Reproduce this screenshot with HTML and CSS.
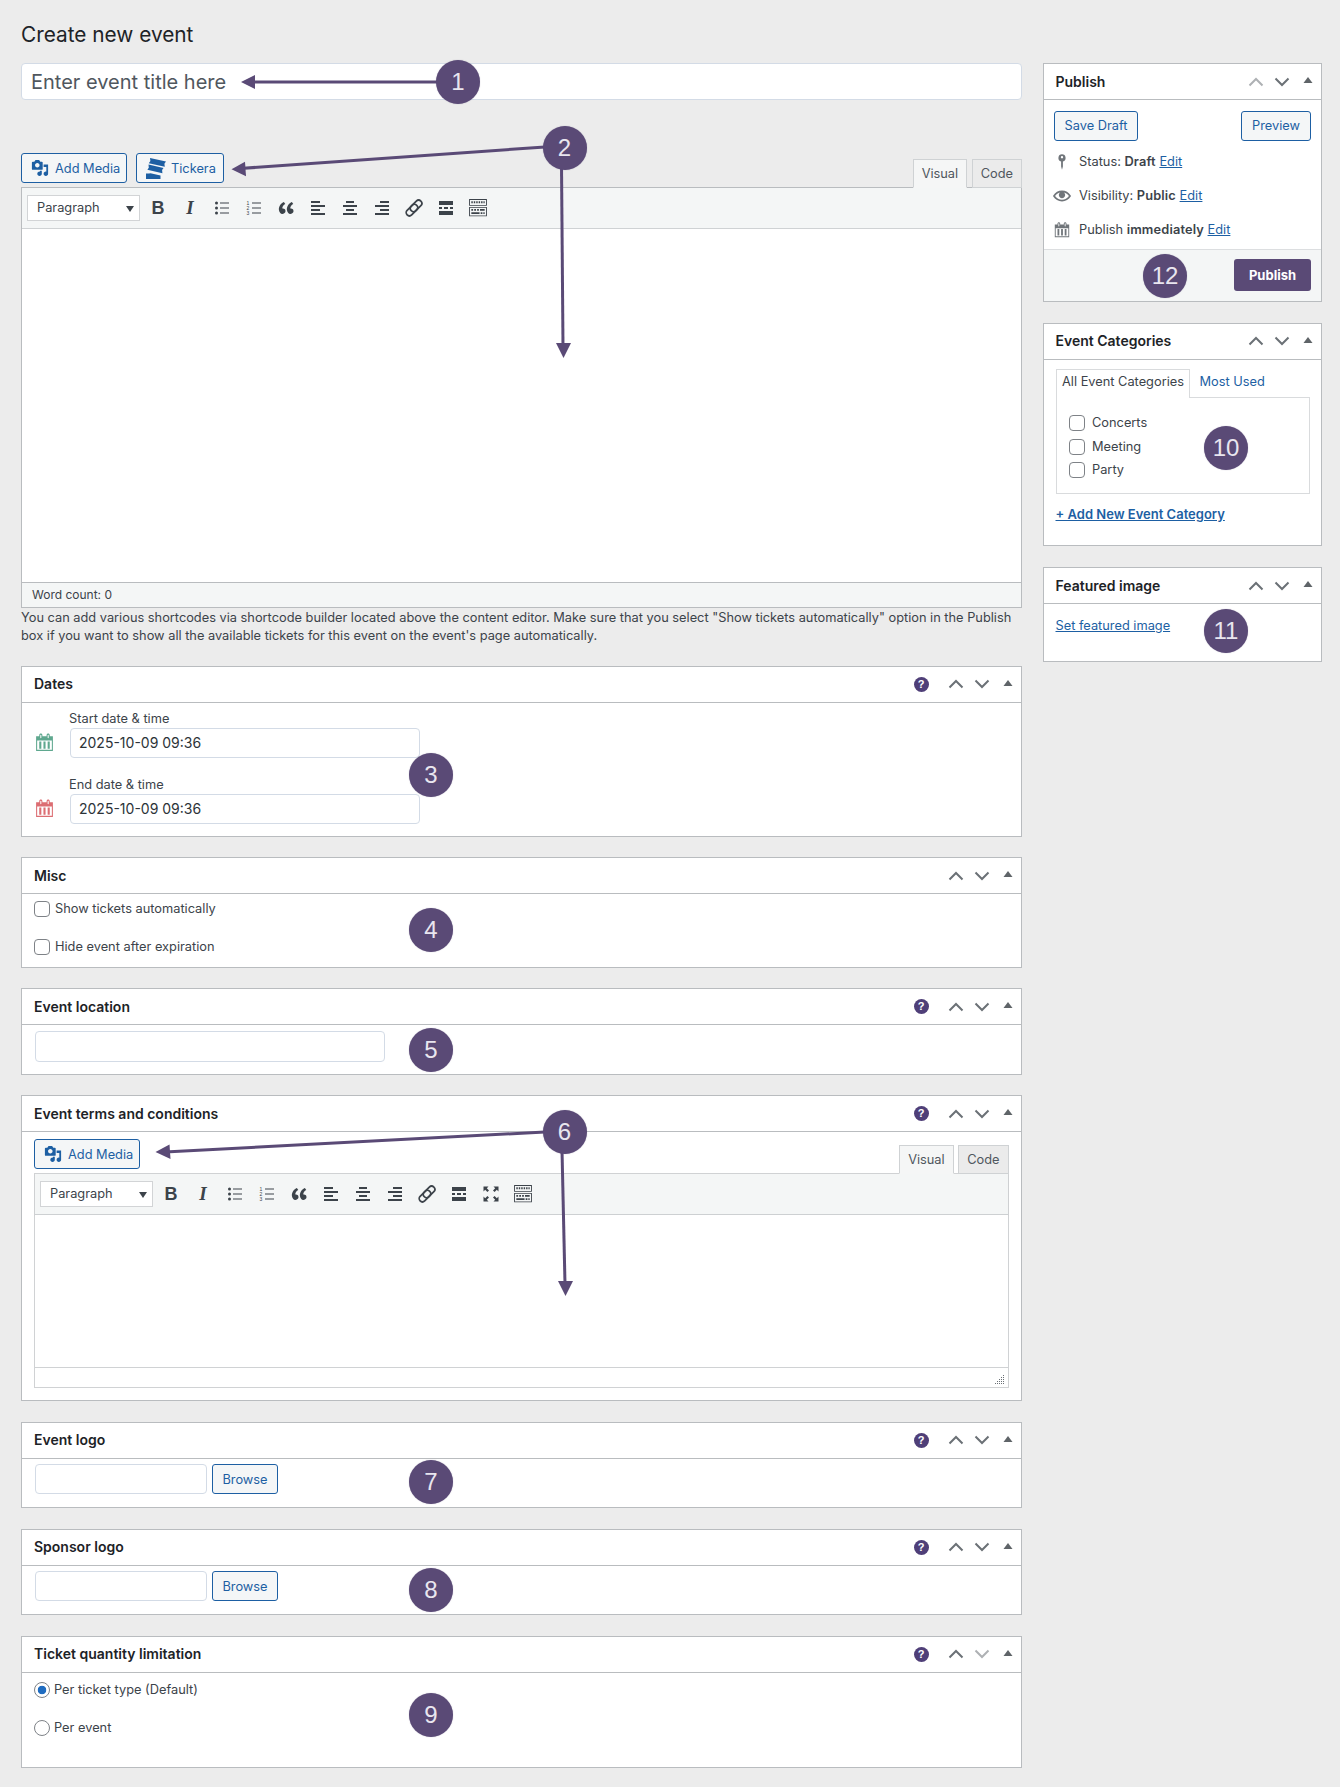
FILE: index.html
```html
<!DOCTYPE html>
<html lang="en">
<head>
<meta charset="utf-8">
<title>Create new event</title>
<link rel="stylesheet" href="styles.css">
</head>
<body>
<svg class="sprite" xmlns="http://www.w3.org/2000/svg">
  <symbol id="i-media" viewBox="0 0 20 20"><path d="M13 11V4c0-.55-.45-1-1-1h-1.67L9 1H5L3.67 3H2c-.55 0-1 .45-1 1v7c0 .55.45 1 1 1h10c.55 0 1-.45 1-1zM7 4.500c1.380 0 2.500 1.120 2.500 2.500S8.380 9.500 7 9.500 4.500 8.380 4.500 7 5.620 4.500 7 4.500zM14 6h5v10.500c0 1.380-1.120 2.500-2.500 2.500S14 17.880 14 16.500s1.120-2.500 2.500-2.500c.17 0 .34.02.5.05V9h-3V6zm-4 8.050V13h2v3.500c0 1.380-1.120 2.500-2.500 2.500S7 17.880 7 16.500 8.120 14 9.500 14c.17 0 .34.02.5.05z"/></symbol>
  <symbol id="i-tickera" viewBox="0 0 22 24"><path d="M5 2l16 3.500-1.600 2.200.4 3-16-3.500 1.600-2.200z"/><path d="M3.500 8.500l15 3.400-1.400 2.100.3 3.200-15-3.400 1.400-2.100z"/><path d="M1 17.500h3l1.500-.3 10 2.300V23H1z"/></symbol>
  <symbol id="i-ul" viewBox="0 0 20 20"><path d="M4.500 6.500a1.500 1.500 0 1 1 0-3 1.500 1.500 0 0 1 0 3zM8 4.500h9v1H8zM4.500 11.500a1.500 1.500 0 1 1 0-3 1.500 1.500 0 0 1 0 3zM8 9.500h9v1H8zM4.500 16.500a1.500 1.500 0 1 1 0-3 1.500 1.500 0 0 1 0 3zM8 14.500h9v1H8z"/></symbol>
  <symbol id="i-ol" viewBox="0 0 20 20"><text class="ol-num" x="4" y="6.800">1</text><text class="ol-num" x="4" y="11.800">2</text><text class="ol-num" x="4" y="16.800">3</text><path d="M8 4.500h9v1H8zM8 9.500h9v1H8zM8 14.500h9v1H8z"/></symbol>
  <symbol id="i-quote" viewBox="0 0 20 20"><path d="M9.490 13.220c0-.74-.2-1.380-.61-1.900-.62-.78-1.830-.88-2.530-.72-.29-1.650 1.110-3.750 2.920-4.650L7.880 4c-2.730 1.300-5.420 4.280-4.960 8.050C3.210 14.430 4.590 16 6.300 16c.75 0 1.380-.23 1.890-.69.53-.46 1.300-1.110 1.300-2.090zm8 0c0-.74-.2-1.380-.61-1.900-.63-.78-1.840-.88-2.540-.72-.29-1.650 1.110-3.750 2.930-4.650L15.880 4c-2.730 1.300-5.420 4.280-4.960 8.050.29 2.380 1.670 3.950 3.380 3.950.75 0 1.380-.23 1.890-.69.53-.46 1.300-1.110 1.300-2.090z"/></symbol>
  <symbol id="i-al" viewBox="0 0 20 20"><path d="M12 5V3H3v2h9zm5 4V7H3v2h14zm-5 4v-2H3v2h9zm5 4v-2H3v2h14z"/></symbol>
  <symbol id="i-ac" viewBox="0 0 20 20"><path d="M14 5V3H6v2h8zm3 4V7H3v2h14zm-3 4v-2H6v2h8zm3 4v-2H3v2h14z"/></symbol>
  <symbol id="i-ar" viewBox="0 0 20 20"><path d="M17 5V3H8v2h9zm0 4V7H3v2h14zm0 4v-2H8v2h9zm0 4v-2H3v2h14z"/></symbol>
  <symbol id="i-link" viewBox="3 3 14 14"><g class="link-stroke"><rect x="9.200" y="3.800" width="4.500" height="9.500" rx="2.250" transform="rotate(45 11.450 8.550)"/><rect x="6.300" y="6.700" width="4.500" height="9.500" rx="2.250" transform="rotate(45 8.550 11.450)"/></g></symbol>
  <symbol id="i-hr" viewBox="0 0 20 20"><path d="M17 7V3H3v4h14zM6 11V9H3v2h3zm6 0V9H8v2h4zm5 0V9h-3v2h3zm0 6v-4H3v4h14z"/></symbol>
  <symbol id="i-full" viewBox="0 0 20 20"><path d="M2.500 2.500h5L5.800 4.200 8 6.400l-1.600 1.600-2.200-2.200L2.500 7.500zM17.500 2.500v5l-1.700-1.700L13.600 8 12 6.400l2.200-2.200-1.700-1.700zM2.500 17.500v-5l1.700 1.700L6.400 12 8 13.600l-2.200 2.200 1.700 1.700zM17.500 17.500h-5l1.700-1.700L12 13.600l1.600-1.600 2.200 2.200 1.700-1.700z"/></symbol>
  <symbol id="i-kbd" viewBox="1 1 18 18"><path fill-rule="evenodd" d="M2 2h16v6H2zm.8.800v4.400h14.400V2.800zM2 9h16v8.500H2zm.8.800v6.900h14.400V9.800z"/><path d="M4 4h1.300v1.800H4zm2.200 0h1.300v1.800H6.200zm2.200 0h1.300v1.800H8.400zm2.200 0h1.300v1.800h-1.300zm2.200 0h1.300v1.800h-1.300zm2.100 0h1.100v1.800h-1.100zM4 11h1.600v1.500H4zm2.600 0h1.600v1.500H6.600zm2.600 0h1.600v1.500H9.200zm2.600 0h4.200v1.500h-4.200zM4 13.900h7.400v1.500H4zm8.400 0h1.600v1.500h-1.600zm2.400 0H16v1.500h-1.200z"/></symbol>
  <symbol id="i-cal" viewBox="0 0 20 20"><path d="M15 4h3v14H2V4h3V3c0-.83.67-1.500 1.500-1.500S8 2.170 8 3v1h4V3c0-.83.67-1.500 1.500-1.500S15 2.170 15 3v1zM6 3v2.500c0 .28.22.5.5.5s.5-.22.5-.5V3c0-.28-.22-.5-.5-.5S6 2.720 6 3zm7 0v2.500c0 .28.22.5.5.5s.5-.22.5-.5V3c0-.28-.22-.5-.5-.5s-.5.22-.5.5zm4 14V8H3v9h14zM7 16V9H5v7h2zm4 0V9H9v7h2zm4 0V9h-2v7h2z"/></symbol>
  <symbol id="i-pin" viewBox="0 0 20 20"><path fill-rule="evenodd" d="M10 1.500a4 4 0 0 1 1 7.870V15l-1 3.500L9 15V9.370A4 4 0 0 1 10 1.500zM10 3.300a1.300 1.300 0 1 0 0 2.600 1.300 1.300 0 0 0 0-2.600z"/></symbol>
  <symbol id="i-eye" viewBox="0 0 20 20"><path d="M19.700 9.400C17.700 6 14 3.900 10 3.900S2.300 6 .3 9.400L0 10l.3.6c2 3.400 5.700 5.500 9.700 5.500s7.700-2.100 9.700-5.500l.3-.6-.3-.6zM10 14.100c-3.100 0-6-1.600-7.700-4.100C3.600 8 5.700 6.600 8 6.100c-.9.6-1.500 1.700-1.500 2.900 0 1.900 1.600 3.500 3.500 3.500s3.500-1.600 3.500-3.500c0-1.200-.6-2.300-1.500-2.900 2.300.5 4.400 1.900 5.700 3.900-1.700 2.500-4.600 4.100-7.700 4.100z"/></symbol>
  <symbol id="i-up" viewBox="0 0 16 10"><path d="M1.500 8.500L8 2l6.500 6.500" class="chev"/></symbol>
  <symbol id="i-down" viewBox="0 0 16 10"><path d="M1.500 1.500L8 8l6.500-6.500" class="chev"/></symbol>
  <symbol id="i-tri" viewBox="0 0 10 8"><path d="M5 1l4.500 6H.5z"/></symbol>
  <symbol id="i-arrow" viewBox="0 0 10 8"><path d="M1 1h8L5 7z"/></symbol>
  <symbol id="i-grip" viewBox="0 0 10 10"><path d="M8 1h1v1H8zM6 3h1v1H6zM8 3h1v1H8zM4 5h1v1H4zM6 5h1v1H6zM8 5h1v1H8zM2 7h1v1H2zM4 7h1v1H4zM6 7h1v1H6zM8 7h1v1H8zM0 9h1v1H0zM2 9h1v1H2zM4 9h1v1H4zM6 9h1v1H6zM8 9h1v1H8z"/></symbol>
</svg>

<div class="page">
  <h1 class="page-title">Create new event</h1>
  <div class="layout">
    <main class="main-col">
      <input class="title-input" type="text" placeholder="Enter event title here">

      <div class="editor-tools first">
        <div class="btn-group">
          <button class="btn btn-media"><svg class="btn-icon"><use href="#i-media"/></svg>Add Media</button>
          <button class="btn btn-media btn-tickera"><svg class="btn-icon tickera"><use href="#i-tickera"/></svg>Tickera</button>
        </div>
        <div class="tabs">
          <span class="tab active">Visual</span>
          <span class="tab">Code</span>
        </div>
      </div>
      <div class="editor">
        <div class="toolbar">
          <div class="select">Paragraph<svg class="select-arrow"><use href="#i-arrow"/></svg></div>
          <span class="tb tb-b">B</span>
          <span class="tb tb-i">I</span>
          <svg class="tb"><use href="#i-ul"/></svg>
          <svg class="tb"><use href="#i-ol"/></svg>
          <svg class="tb"><use href="#i-quote"/></svg>
          <svg class="tb"><use href="#i-al"/></svg>
          <svg class="tb"><use href="#i-ac"/></svg>
          <svg class="tb"><use href="#i-ar"/></svg>
          <svg class="tb"><use href="#i-link"/></svg>
          <svg class="tb"><use href="#i-hr"/></svg>
          <svg class="tb"><use href="#i-kbd"/></svg>
        </div>
        <div class="edit-area main-area"></div>
        <div class="statusbar">Word count: 0</div>
      </div>
      <p class="help-text">You can add various shortcodes via shortcode builder located above the content editor. Make sure that you select "Show tickets automatically" option in the Publish box if you want to show all the available tickets for this event on the event's page automatically.</p>

      <section class="box">
        <header class="box-head"><h2>Dates</h2>
          <span class="ctrls"><span class="help">?</span><svg class="c-up"><use href="#i-up"/></svg><svg class="c-down"><use href="#i-down"/></svg><svg class="c-tri"><use href="#i-tri"/></svg></span>
        </header>
        <div class="dates-body">
          <div class="date-row">
            <label class="date-label">Start date &amp; time</label>
            <svg class="date-icon green"><use href="#i-cal"/></svg>
            <input class="field date-field" type="text" value="2025-10-09 09:36">
          </div>
          <div class="date-row">
            <label class="date-label">End date &amp; time</label>
            <svg class="date-icon red"><use href="#i-cal"/></svg>
            <input class="field date-field" type="text" value="2025-10-09 09:36">
          </div>
        </div>
      </section>

      <section class="box">
        <header class="box-head"><h2>Misc</h2>
          <span class="ctrls"><svg class="c-up"><use href="#i-up"/></svg><svg class="c-down"><use href="#i-down"/></svg><svg class="c-tri"><use href="#i-tri"/></svg></span>
        </header>
        <div class="options-body misc-body">
          <label class="option"><input type="checkbox" class="check">Show tickets automatically</label>
          <label class="option"><input type="checkbox" class="check">Hide event after expiration</label>
        </div>
      </section>

      <section class="box">
        <header class="box-head"><h2>Event location</h2>
          <span class="ctrls"><span class="help">?</span><svg class="c-up"><use href="#i-up"/></svg><svg class="c-down"><use href="#i-down"/></svg><svg class="c-tri"><use href="#i-tri"/></svg></span>
        </header>
        <div class="field-body"><input class="field location-field" type="text"></div>
      </section>

      <section class="box">
        <header class="box-head"><h2>Event terms and conditions</h2>
          <span class="ctrls"><span class="help">?</span><svg class="c-up"><use href="#i-up"/></svg><svg class="c-down"><use href="#i-down"/></svg><svg class="c-tri"><use href="#i-tri"/></svg></span>
        </header>
        <div class="terms-body">
          <div class="editor-tools">
            <div class="btn-group">
              <button class="btn btn-media"><svg class="btn-icon"><use href="#i-media"/></svg>Add Media</button>
            </div>
            <div class="tabs">
              <span class="tab active">Visual</span>
              <span class="tab">Code</span>
            </div>
          </div>
          <div class="editor light">
            <div class="toolbar">
              <div class="select">Paragraph<svg class="select-arrow"><use href="#i-arrow"/></svg></div>
              <span class="tb tb-b">B</span>
              <span class="tb tb-i">I</span>
              <svg class="tb"><use href="#i-ul"/></svg>
              <svg class="tb"><use href="#i-ol"/></svg>
              <svg class="tb"><use href="#i-quote"/></svg>
              <svg class="tb"><use href="#i-al"/></svg>
              <svg class="tb"><use href="#i-ac"/></svg>
              <svg class="tb"><use href="#i-ar"/></svg>
              <svg class="tb"><use href="#i-link"/></svg>
              <svg class="tb"><use href="#i-hr"/></svg>
              <svg class="tb"><use href="#i-full"/></svg>
              <svg class="tb"><use href="#i-kbd"/></svg>
            </div>
            <div class="edit-area terms-area"></div>
            <div class="statusbar blank"><svg class="grip"><use href="#i-grip"/></svg></div>
          </div>
        </div>
      </section>

      <section class="box">
        <header class="box-head"><h2>Event logo</h2>
          <span class="ctrls"><span class="help">?</span><svg class="c-up"><use href="#i-up"/></svg><svg class="c-down"><use href="#i-down"/></svg><svg class="c-tri"><use href="#i-tri"/></svg></span>
        </header>
        <div class="field-body logo-body"><input class="field logo-field" type="text"><button class="btn browse">Browse</button></div>
      </section>

      <section class="box">
        <header class="box-head"><h2>Sponsor logo</h2>
          <span class="ctrls"><span class="help">?</span><svg class="c-up"><use href="#i-up"/></svg><svg class="c-down"><use href="#i-down"/></svg><svg class="c-tri"><use href="#i-tri"/></svg></span>
        </header>
        <div class="field-body logo-body"><input class="field logo-field" type="text"><button class="btn browse">Browse</button></div>
      </section>

      <section class="box">
        <header class="box-head"><h2>Ticket quantity limitation</h2>
          <span class="ctrls"><span class="help">?</span><svg class="c-up"><use href="#i-up"/></svg><svg class="c-down off"><use href="#i-down"/></svg><svg class="c-tri"><use href="#i-tri"/></svg></span>
        </header>
        <div class="options-body radio-body">
          <label class="option"><input type="radio" name="limit" class="radio" checked>Per ticket type (Default)</label>
          <label class="option"><input type="radio" name="limit" class="radio">Per event</label>
        </div>
      </section>
    </main>

    <aside class="side-col">
      <section class="box">
        <header class="box-head side"><h2>Publish</h2>
          <span class="ctrls"><svg class="c-up off"><use href="#i-up"/></svg><svg class="c-down"><use href="#i-down"/></svg><svg class="c-tri"><use href="#i-tri"/></svg></span>
        </header>
        <div class="pub-actions"><button class="btn">Save Draft</button><button class="btn">Preview</button></div>
        <div class="pub-rows">
          <div class="pub-row"><svg class="pub-icon"><use href="#i-pin"/></svg><span>Status: <b>Draft</b> <a href="#">Edit</a></span></div>
          <div class="pub-row"><svg class="pub-icon"><use href="#i-eye"/></svg><span>Visibility: <b>Public</b> <a href="#">Edit</a></span></div>
          <div class="pub-row"><svg class="pub-icon"><use href="#i-cal"/></svg><span>Publish <b>immediately</b> <a href="#">Edit</a></span></div>
        </div>
        <div class="pub-foot"><button class="btn-publish">Publish</button></div>
      </section>

      <section class="box">
        <header class="box-head side"><h2>Event Categories</h2>
          <span class="ctrls"><svg class="c-up"><use href="#i-up"/></svg><svg class="c-down"><use href="#i-down"/></svg><svg class="c-tri"><use href="#i-tri"/></svg></span>
        </header>
        <div class="cat-body">
          <div class="cat-tabs"><span class="cat-tab active">All Event Categories</span><a class="cat-tab" href="#">Most Used</a></div>
          <div class="cat-panel">
            <label class="cat-item"><input type="checkbox" class="check">Concerts</label>
            <label class="cat-item"><input type="checkbox" class="check">Meeting</label>
            <label class="cat-item"><input type="checkbox" class="check">Party</label>
          </div>
          <a class="add-cat" href="#">+ Add New Event Category</a>
        </div>
      </section>

      <section class="box">
        <header class="box-head side"><h2>Featured image</h2>
          <span class="ctrls"><svg class="c-up"><use href="#i-up"/></svg><svg class="c-down"><use href="#i-down"/></svg><svg class="c-tri"><use href="#i-tri"/></svg></span>
        </header>
        <div class="featured-body"><a href="#">Set featured image</a></div>
      </section>
    </aside>
  </div>

  <svg class="arrows" viewBox="0 0 1340 1787" xmlns="http://www.w3.org/2000/svg">
    <path class="arrow-line" d="M440 82H250"/>
    <path class="arrow-head" d="M241 82l14-7v14z"/>
    <path class="arrow-line" d="M545 147L240 168.500"/>
    <path class="arrow-head" d="M231.500 169.300l13.500-7.500 1 14.500z"/>
    <path class="arrow-line" d="M561.500 165L563 346"/>
    <path class="arrow-head" d="M563.500 358l-7.500-15h15z"/>
    <path class="arrow-line" d="M545 1132L165 1152"/>
    <path class="arrow-head" d="M155.500 1152l14-7.500 1 14.500z"/>
    <path class="arrow-line" d="M562 1150L565 1284"/>
    <path class="arrow-head" d="M565.500 1296l-7.500-15h15z"/>
  </svg>
  <span class="badge b1">1</span>
  <span class="badge b2">2</span>
  <span class="badge b3">3</span>
  <span class="badge b4">4</span>
  <span class="badge b5">5</span>
  <span class="badge b6">6</span>
  <span class="badge b7">7</span>
  <span class="badge b8">8</span>
  <span class="badge b9">9</span>
  <span class="badge b10">10</span>
  <span class="badge b11">11</span>
  <span class="badge b12">12</span>
</div>
</body>
</html>
```

FILE: styles.css
```css
* { box-sizing: border-box; }
html, body { margin: 0; padding: 0; }
body {
  background: #ececec;
  color: #3c434a;
  font-family: Inter, "Liberation Sans", sans-serif;
  font-size: 12.800px;
  line-height: 18px;
}
.sprite { display: none; }
.page {
  position: relative;
  width: 1340px;
  height: 1787px;
  padding: 0 18px 0 21px;
  overflow: hidden;
}
.page-title {
  margin: 0;
  padding-top: 20px;
  height: 63px;
  font-size: 20.800px;
  line-height: 29px;
  font-weight: 400;
  color: #1d2327;
}
.layout { display: flex; gap: 21px; align-items: flex-start; }
.main-col { width: 1001px; flex: none; }
.side-col { width: 279px; flex: none; }

.title-input {
  display: block;
  width: 100%;
  height: 36.500px;
  padding: 1.500px 9px 0;
  border: 1px solid #d3dbe6;
  border-radius: 4px;
  background: #fff;
  font: 400 20px Inter, "Liberation Sans", sans-serif;
  color: #3c434a;
  margin-bottom: 53.500px;
}
.title-input::placeholder { color: #50575e; opacity: 1; }

.editor-tools {
  display: flex;
  justify-content: space-between;
  align-items: flex-start;
  height: 34px;
}
.btn-group { display: flex; gap: 9px; }
.btn {
  display: inline-flex;
  align-items: center;
  height: 30px;
  padding: 1.500px 10px 0;
  border: 1px solid #1d5fa3;
  border-radius: 3px;
  background: #f4f6f7;
  color: #1d5fa3;
  font: 400 12.800px/18px Inter, "Liberation Sans", sans-serif;
  white-space: nowrap;
}
.btn-media { padding-left: 9px; padding-right: 7px; width: 106px; }
.btn-tickera { width: 88px; padding-left: 8px; }
.btn-icon { width: 18px; height: 18px; fill: #1d5fa3; margin: -1.500px 6px 0 0; flex: none; }
.btn-icon.tickera { width: 22px; height: 24px; margin-right: 4px; }
.tabs { display: flex; gap: 4.500px; align-self: flex-end; margin-bottom: -1px; position: relative; }
.tab {
  height: 29px;
  padding: 0 8px;
  border: 1px solid #cfd2d4;
  background: #ebebeb;
  color: #50575e;
  display: flex;
  align-items: center;
  justify-content: center;
}
.tab.active { background: #f5f6f6; border-bottom-color: #f5f6f6; }

.editor { border: 1px solid #b9bcbf; background: #fff; }
.editor.light { border-color: #d0d2d4; }
.toolbar {
  display: flex;
  align-items: center;
  height: 41px;
  padding: 0 0 0 5px;
  background: #f4f6f6;
  border-bottom: 1px solid #cfd2d4;
}
.editor.light .toolbar { box-shadow: 0 1px 1px rgba(0,0,0,.06); border-bottom-color: #cdd0d2; }
.select {
  display: flex;
  align-items: center;
  width: 113px;
  height: 26px;
  padding-left: 9px;
  background: #fff;
  border: 1px solid #d2d4d6;
  color: #3c434a;
  margin-right: 2px;
  position: relative;
}
.select-arrow { position: absolute; right: 4px; top: 9px; width: 10px; height: 8px; fill: #3c434a; }
.tb {
  width: 20px;
  height: 20px;
  margin: 0 6px;
  fill: #3c434a;
  flex: none;
  text-align: center;
  color: #3c434a;
}
.tb-b { font: 700 18px/20px "Liberation Sans", sans-serif; }
.tb-i { font: italic 700 19px/20px "Liberation Serif", serif; }
.ol-num { font: 5px "Liberation Sans", sans-serif; fill: #3c434a; text-anchor: middle; }
.link-stroke { fill: none; stroke: #3c434a; stroke-width: 1.200; }
.edit-area { background: #fff; }
.main-area { height: 353px; }
.terms-area { height: 152px; }
.statusbar {
  height: 24.500px;
  padding: 2px 0 0 10px;
  border-top: 1px solid #b9bcbf;
  background: #f4f6f6;
  font-size: 12px;
  line-height: 20px;
  color: #3c434a;
}
.statusbar.blank {
  position: relative;
  height: 19.500px;
  background: #fff;
  border-top-color: #d0d2d4;
}
.grip { position: absolute; right: 3px; bottom: 3px; width: 10px; height: 10px; fill: #6b7176; }
.help-text { margin: 0 0 21px; padding-top: 1.500px; height: 37px; color: #3c434a; }

.box {
  background: #fff;
  border: 1px solid #b9bcbf;
  margin-bottom: 20.500px;
}
.box-head {
  display: flex;
  align-items: center;
  justify-content: space-between;
  height: 36px;
  padding-left: 12px;
  border-bottom: 1px solid #b9bcbf;
}
.box-head h2 {
  margin: 0;
  font-size: 14px;
  line-height: 18px;
  font-weight: 600;
  color: #1d2327;
}
.ctrls { display: flex; align-items: center; position: relative; height: 20px; }
.help {
  width: 15px;
  height: 15px;
  margin-right: 19.500px;
  border-radius: 50%;
  background: #4f3f78;
  color: #fff;
  font: 700 11px/15px "Liberation Sans", sans-serif;
  text-align: center;
}
.c-up, .c-down { width: 16px; height: 10px; fill: none; color: #6b7176; }
.c-up { margin-right: 10px; }
.c-down { margin-right: 13px; }
.c-tri { width: 10px; height: 8px; fill: #5f6468; margin-right: 8px; margin-top: -3px; }
.chev { fill: none; stroke: currentColor; stroke-width: 2; }
.c-up.off, .c-down.off { color: #aeb1b4; }

.dates-body { padding: 7px 0 0 14px; height: 133px; }
.date-row {
  display: grid;
  grid-template-columns: 34px 350px;
  grid-template-rows: 18px 30px;
  align-items: center;
}
.date-row + .date-row { margin-top: 18px; }
.date-label { grid-column: 2; grid-row: 1; margin-left: -1px; }
.date-icon { grid-column: 1; grid-row: 2; width: 21px; height: 21px; margin-left: -2.500px; }
.green { fill: #5fa88f; }
.red { fill: #dc6d72; }
.date-field { grid-column: 2; grid-row: 2; }
.field {
  height: 30px;
  padding: 0 8px;
  border: 1px solid #d3dbe6;
  border-radius: 4px;
  background: #fff;
  font: 400 14px Inter, "Liberation Sans", sans-serif;
  color: #2c3338;
}
.date-field { width: 350px; }
.options-body { display: flex; flex-direction: column; gap: 20px; padding-left: 12px; }
.option { display: flex; align-items: center; height: 18px; }
.misc-body { padding-top: 6px; height: 72.500px; }
.radio-body { padding-top: 8px; height: 94.500px; }
.check {
  appearance: none;
  width: 16px;
  height: 16px;
  margin: 0 5px 0 0;
  border: 1px solid #7e8287;
  border-radius: 4px;
  background: #fff;
  flex: none;
}
.radio {
  appearance: none;
  width: 16px;
  height: 16px;
  margin: 0 4px 0 0;
  border: 1px solid #7e8287;
  border-radius: 50%;
  background: #fff;
  flex: none;
}
.radio:checked { background: radial-gradient(circle, #1f6cc0 0 4px, #fff 4.600px); }
.field-body { padding: 5.500px 12.500px 12px; display: flex; gap: 5.500px; }
.location-field { width: 350px; height: 31px; }
.logo-field { width: 172px; }
.browse { width: 66px; padding-left: 0; padding-right: 0; justify-content: center; }
.logo-body { padding-bottom: 13px; }

.terms-body { padding: 7px 12.500px 12.500px 12px; }

.side-col .box { margin-bottom: 21px; }
.box-head.side { padding-left: 11.500px; }
.pub-actions { display: flex; justify-content: space-between; padding: 10.500px 10px 0 9.500px; }
.pub-rows { display: flex; flex-direction: column; gap: 16px; padding: 12px 0 10.500px 9px; }
.pub-row { display: flex; align-items: center; height: 18px; gap: 8px; }
.pub-icon { width: 18px; height: 18px; fill: #70757a; flex: none; }
.pub-row b { font-weight: 600; letter-spacing: .15px; }
a { color: #1d5fa3; }
.pub-foot {
  display: flex;
  justify-content: flex-end;
  padding: 9px 10px 9.500px;
  background: #f4f6f6;
  border-top: 1px solid #dcdee0;
}
.btn-publish {
  width: 77px;
  height: 32px;
  padding: 0;
  border: 0;
  border-radius: 3px;
  background: #5a4a76;
  color: #fff;
  font: 700 13px "Inter", "Liberation Sans", sans-serif;
}
.cat-body { padding: 9.500px 11.500px 0; height: 185.500px; }
.cat-tabs { display: flex; height: 28.500px; position: relative; margin-bottom: -1px; z-index: 1; }
.cat-tab { padding: 0 5.500px; line-height: 24px; text-decoration: none; border: 1px solid transparent; border-bottom: 0; }
.cat-tab.active { border-color: #d9dbdd; background: #fff; width: 134px; white-space: nowrap; }
.cat-tabs a.cat-tab { padding-left: 9px; }
.cat-panel {
  height: 97px;
  padding: 14px 0 0 12px;
  border: 1px solid #d9dbdd;
  width: 254px;
}
.cat-item { display: flex; align-items: center; height: 23.500px; }
.cat-item .check { margin-right: 7.500px; }
.add-cat { display: block; margin-top: 11.500px; font-size: 13px; font-weight: 600; }
.featured-body { padding: 13px 11.500px 0; height: 57px; }

.arrows { position: absolute; left: 0; top: 0; width: 1340px; height: 1787px; pointer-events: none; }
.arrow-line { fill: none; stroke: #5a4a76; stroke-width: 3; }
.arrow-head { fill: #5a4a76; }
.badge {
  position: absolute;
  width: 44px;
  height: 44px;
  margin: -22px 0 0 -22px;
  border-radius: 50%;
  background: #5a4a76;
  box-shadow: 0 0 1px rgba(90,74,118,.5);
  color: #e9e6ef;
  font: 400 24px/44px "Liberation Sans", sans-serif;
  text-align: center;
}
.b1 { left: 458px; top: 82px; }
.b2 { left: 564.500px; top: 147.500px; }
.b3 { left: 431px; top: 775px; }
.b4 { left: 431px; top: 930px; }
.b5 { left: 431px; top: 1049.500px; }
.b6 { left: 564.500px; top: 1132px; }
.b7 { left: 431px; top: 1482px; }
.b8 { left: 431px; top: 1590px; }
.b9 { left: 431px; top: 1715px; }
.b10 { left: 1226px; top: 447.500px; }
.b11 { left: 1226px; top: 631px; }
.b12 { left: 1165px; top: 275.500px; }
```
